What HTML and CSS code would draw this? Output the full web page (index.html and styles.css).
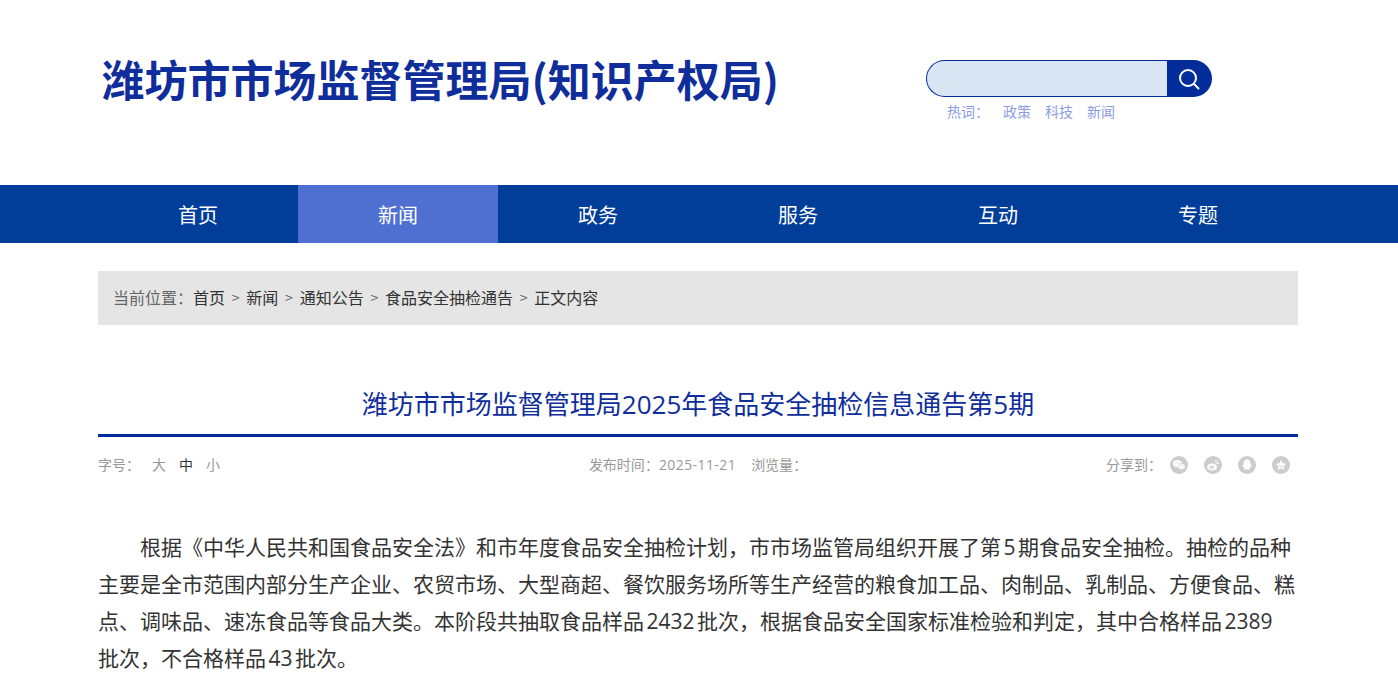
FILE: index.html
```html
<!DOCTYPE html>
<html lang="zh-CN">
<head>
<meta charset="utf-8">
<title>潍坊市市场监督管理局2025年食品安全抽检信息通告第5期</title>
<link rel="stylesheet" href="styles.css">
</head>
<body>
<header class="header">
  <div class="wrap header-inner">
    <h1 class="logo"><span class="logo-text">潍坊市市场监督管理局(知识产权局)</span></h1>
    <div class="search-area">
      <div class="search">
        <div class="search-input"></div>
        <div class="search-btn">
          <svg width="24" height="24" viewBox="0 0 24 24" fill="none" stroke="#fff" stroke-width="2"><circle cx="11" cy="11" r="8"/><path d="M17 17l4.500 4.500" stroke-linecap="round"/></svg>
        </div>
      </div>
      <div class="hot"><span class="hot-label">热词<span class="colon">：</span></span><a>政策</a><a>科技</a><a>新闻</a></div>
    </div>
  </div>
</header>
<nav class="nav">
  <div class="wrap nav-inner">
    <a class="nav-item">首页</a>
    <a class="nav-item active">新闻</a>
    <a class="nav-item">政务</a>
    <a class="nav-item">服务</a>
    <a class="nav-item">互动</a>
    <a class="nav-item">专题</a>
  </div>
</nav>
<main class="wrap">
  <div class="crumb">
    <span class="crumb-label">当前位置<span class="colon">：</span></span><a>首页</a><span class="sep">&gt;</span><a>新闻</a><span class="sep">&gt;</span><a>通知公告</a><span class="sep">&gt;</span><a>食品安全抽检通告</a><span class="sep">&gt;</span><a>正文内容</a>
  </div>
  <h2 class="title">潍坊市市场监督管理局2025年食品安全抽检信息通告第5期</h2>
  <div class="meta">
    <div class="fontsize"><span class="fs-label">字号<span class="colon">：</span></span><a>大</a><a class="on">中</a><a>小</a></div>
    <div class="pub">发布时间<span class="colon">：</span><span class="num">2025-11-21</span><span class="views">浏览量<span class="colon">：</span></span></div>
    <div class="share">
      <span class="share-label">分享到<span class="colon">：</span></span>
      <svg class="ico" viewBox="0 0 18 18"><circle cx="9" cy="9" r="9" fill="#ccc"/><ellipse cx="7.400" cy="7.600" rx="4.400" ry="3.600" fill="#fff"/><ellipse cx="11.600" cy="10.600" rx="3.600" ry="2.900" fill="#fff" stroke="#ccc" stroke-width=".6"/><circle cx="6" cy="7" r=".7" fill="#ccc"/><circle cx="8.800" cy="7" r=".7" fill="#ccc"/><circle cx="10.400" cy="10.200" r=".5" fill="#ccc"/><circle cx="12.800" cy="10.200" r=".5" fill="#ccc"/></svg>
      <svg class="ico" viewBox="0 0 18 18"><circle cx="9" cy="9" r="9" fill="#ccc"/><ellipse cx="8" cy="11" rx="5" ry="3.600" fill="#fff"/><ellipse cx="7.600" cy="11.200" rx="2.200" ry="1.700" fill="#ccc"/><circle cx="7.400" cy="11.300" r=".8" fill="#fff"/><path d="M11 4.400a3.200 3.200 0 0 1 3.400 3.600M11 6.200a1.500 1.500 0 0 1 1.700 1.800" fill="none" stroke="#fff" stroke-width="1"/></svg>
      <svg class="ico" viewBox="0 0 18 18"><circle cx="9" cy="9" r="9" fill="#ccc"/><path d="M9 3.600c2.300 0 3.400 1.800 3.400 3.700 0 .5 1 1.900 1 3.200 0 .9-.6.900-1.100.2-.2 1-.7 1.500-1 1.800.6.300.9.600.5.900-.5.200-1.700.100-2.800-.2-1.100.3-2.300.4-2.800.2-.4-.3-.1-.6.500-.9-.3-.3-.8-.8-1-1.800-.5.700-1.100.7-1.100-.2 0-1.300 1-2.700 1-3.200C5.600 5.400 6.700 3.600 9 3.600z" fill="#fff"/></svg>
      <svg class="ico" viewBox="0 0 18 18"><circle cx="9" cy="9" r="9" fill="#ccc"/><path d="M9 3.800l1.600 3.400 3.700.5-2.700 2.600.7 3.700L9 12.200 5.700 14l.7-3.700-2.700-2.600 3.700-.5z" fill="#fff"/><path d="M7 10.200c1.200.7 2.800.7 4 0" fill="none" stroke="#ccc" stroke-width=".9"/></svg>
    </div>
  </div>
  <article class="content">
    <p>根据《中华人民共和国食品安全法》和市年度食品安全抽检计划，市市场监管局组织开展了第 5 期食品安全抽检。抽检的品种主要是全市范围内部分生产企业、农贸市场、大型商超、餐饮服务场所等生产经营的粮食加工品、肉制品、乳制品、方便食品、糕点、调味品、速冻食品等食品大类。本阶段共抽取食品样品 2432 批次，根据食品安全国家标准检验和判定，其中合格样品 2389<br>批次，不合格样品 43 批次。</p>
  </article>
</main>
</body>
</html>
```
FILE: styles.css
```css
* { box-sizing: border-box; }
html, body { margin: 0; padding: 0; height: 674px; overflow: hidden; }
body { background: #fff; font-family: "Noto Sans CJK SC", "Liberation Sans", sans-serif; color: #333; }
a { color: inherit; text-decoration: none; }
.wrap { width: 1200px; margin-left: 98px; }
.num { font-family: "Open Sans", "Noto Sans CJK SC", sans-serif; letter-spacing: .03em; }
.colon { font-family: "Noto Sans CJK TC", sans-serif; }
.header { height: 185px; }
.header-inner { display: flex; }
.logo { margin: 50px 0 0 3.5px; width: 824.5px; height: 56px; font-size: 43px; line-height: 56px; font-weight: 700; color: #0f2e9c; white-space: nowrap; }
.logo-text { display: inline-block; }
.search-area { margin-top: 60px; width: 286px; }
.search { display: flex; height: 37px; }
.search-input { width: 241px; background: #dae5f3; border: 1px solid #012c9a; border-right: 0; border-radius: 18.5px 0 0 18.5px; }
.search-btn { width: 45px; background: #012c9a; border-radius: 0 18.5px 18.5px 0; display: flex; align-items: center; justify-content: center; padding-right: 2px; }
.hot { margin: 5px 0 0 21px; font-size: 14px; line-height: 18px; color: #8b9ce6; display: flex; }
.hot-label { width: 56px; }
.hot a { margin-right: 14px; }
.nav { height: 58px; background: #003e99; }
.nav-inner { display: flex; }
.nav-item { width: 200px; height: 58px; line-height: 60px; text-align: center; color: #fff; font-size: 20px; }
.nav-item.active { background: #4f6fd1; }
.crumb { margin-top: 28px; height: 54px; background: #e5e5e5; padding: 0 0 2px 15px; display: flex; align-items: center; font-size: 16px; color: #333; white-space: nowrap; }
.crumb-label { color: #666; }
.sep { margin: 0 6.75px; color: #666; font-size: 14px; }
.title { margin: 60px 0 0; height: 52px; font-family: "Open Sans", "Noto Sans CJK SC", sans-serif; font-size: 26px; line-height: 38px; font-weight: 400; color: #0f2e9c; text-align: center; border-bottom: 3px solid #012c9a; }
.meta { display: flex; align-items: center; justify-content: space-between; height: 20px; margin-top: 17px; font-size: 14px; color: #999; }
.fontsize { width: 300px; display: flex; }
.fs-label { width: 54px; }
.fontsize a { margin-right: 13px; }
.fontsize .on { color: #333; }
.pub { white-space: nowrap; }
.views { margin-left: 15px; }
.share { width: 300px; display: flex; justify-content: flex-end; align-items: center; padding-right: 8px; padding-top: 2px; }
.share-label { margin-top: -2px; }
.ico { width: 18px; height: 18px; margin-left: 16px; flex: none; }
.share-label + .ico { margin-left: 8px; }
.content { margin-top: 55px; font-family: "Open Sans", "Noto Sans CJK SC", sans-serif; font-size: 21px; line-height: 37px; color: #333; word-spacing: -3px; }
.content p { margin: 0; text-indent: 2em; }
```
